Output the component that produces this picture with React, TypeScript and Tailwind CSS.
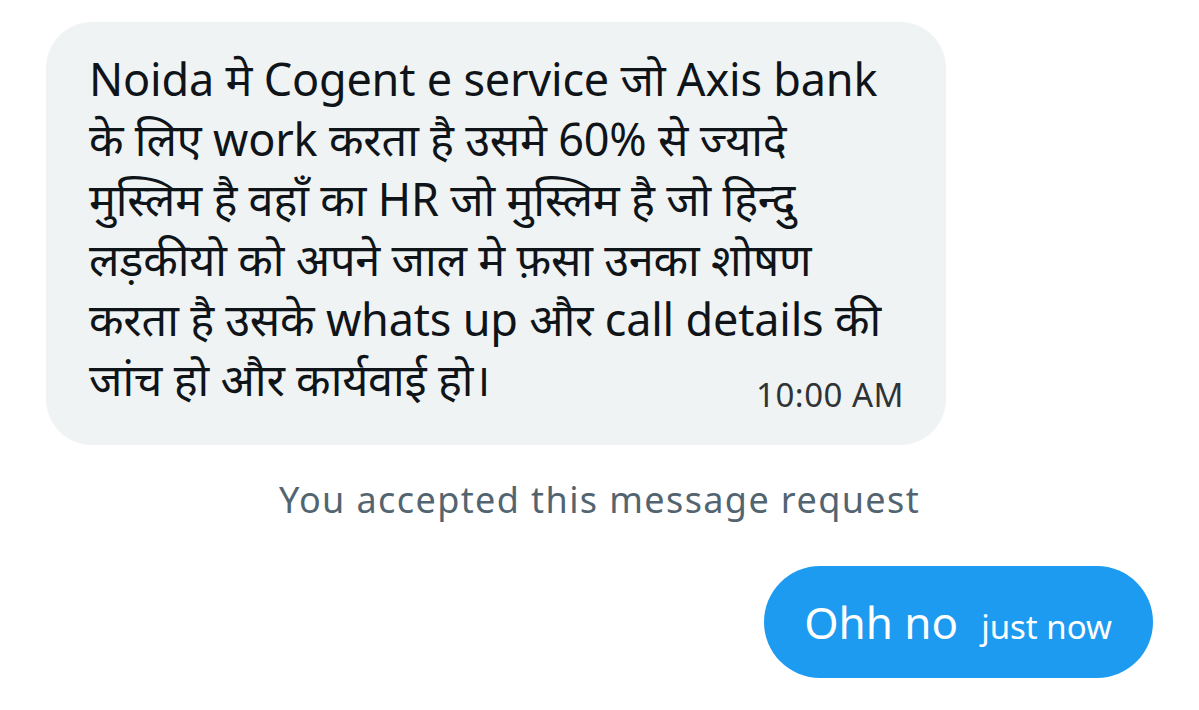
const lines = [
  "Noida मे Cogent e service जो Axis bank",
  "के लिए work करता है उसमे 60% से ज्यादे",
  "मुस्लिम है वहाँ का HR जो मुस्लिम है जो हिन्दु",
  "लड़कीयो को अपने जाल मे फ़सा उनका शोषण",
  "करता है उसके whats up और call details की",
  "जांच हो और कार्यवाई हो।",
];

export default function App() {
  return (
    <div
      className="min-h-screen w-full bg-white"
      style={{ fontFamily: '"Noto Sans", "Noto Sans Devanagari", "Liberation Sans", sans-serif' }}
    >
      <div className="flex flex-col px-[46px] pt-[22px]">
        {/* received message */}
        <div className="flex">
          <div className="w-[900px] rounded-[46px] bg-[#eff3f4] pl-[43px] pr-[42px] pt-[27px] pb-[34px] text-[#0f1419]">
            <p className="text-[45px] leading-[60px] tracking-[-0.2px]">
              {lines.map((l) => (
                <span key={l} className="block whitespace-nowrap">
                  {l}
                </span>
              ))}
            </p>
            <div className="-mt-[30px] flex justify-end">
              <span className="text-[33px] leading-[32px] tracking-[0.5px] text-[#2f3336]">10:00 AM</span>
            </div>
          </div>
        </div>

        <div className="mt-[31px] text-center text-[36px] leading-[48px] tracking-[1.4px] text-[#536471]">
          You accepted this message request
        </div>

        {/* sent message */}
        <div className="mt-[42px] flex justify-end">
          <div className="flex h-[112px] items-center rounded-full bg-[#1d9bf0] pl-[40px] pr-[41px] text-white">
            <div className="flex items-baseline gap-[23px]">
              <span className="text-[44px] leading-none">Ohh no</span>
              <span className="text-[33px] leading-none">just now</span>
            </div>
          </div>
        </div>
      </div>
    </div>
  );
}
